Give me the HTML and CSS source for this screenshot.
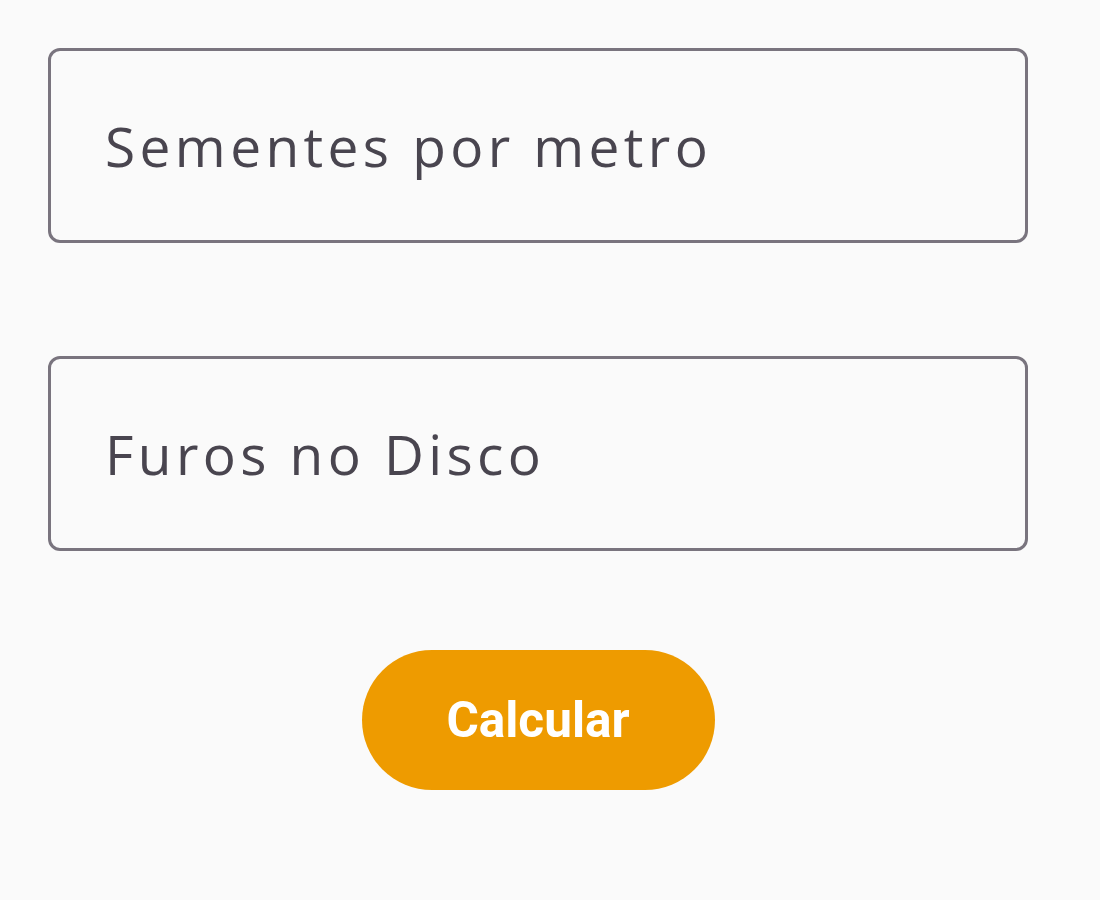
FILE: index.html
```html
<!DOCTYPE html>
<html lang="pt">
<head>
<meta charset="utf-8">
<title>Calculadora</title>
<link rel="stylesheet" href="styles.css">
</head>
<body>
<main class="form">
  <label class="field"><input class="field-input" type="text" placeholder="Sementes por metro"></label>
  <label class="field"><input class="field-input" type="text" placeholder="Furos no Disco"></label>
  <button class="btn" type="button">Calcular</button>
</main>
</body>
</html>
```
FILE: styles.css
```css
html, body {
  margin: 0;
  background: #fafafa;
}
.form {
  width: 980px;
  padding: 48px 0 0 48px;
  display: flex;
  flex-direction: column;
  align-items: stretch;
}
.field {
  display: block;
  height: 195px;
  box-sizing: border-box;
  border: 3px solid #79747e;
  border-radius: 12px;
  margin-bottom: 113px;
}
.field:nth-of-type(2) {
  margin-bottom: 99px;
}
.field-input {
  width: 100%;
  height: 100%;
  box-sizing: border-box;
  border: 0;
  outline: 0;
  background: transparent;
  padding: 0 0 0 54px;
  font-family: "Open Sans", sans-serif;
  font-size: 55px;
  font-weight: 400;
  letter-spacing: 4.4px;
  color: #49454f;
}
.field-input::placeholder {
  color: #49454f;
  opacity: 1;
}
.btn {
  align-self: center;
  width: 353px;
  height: 140px;
  border: 0;
  border-radius: 70px;
  background: #ee9b00;
  color: #ffffff;
  font-family: Roboto, sans-serif;
  font-weight: 700;
  font-size: 49.5px;
  padding: 0;
  cursor: pointer;
}
```
